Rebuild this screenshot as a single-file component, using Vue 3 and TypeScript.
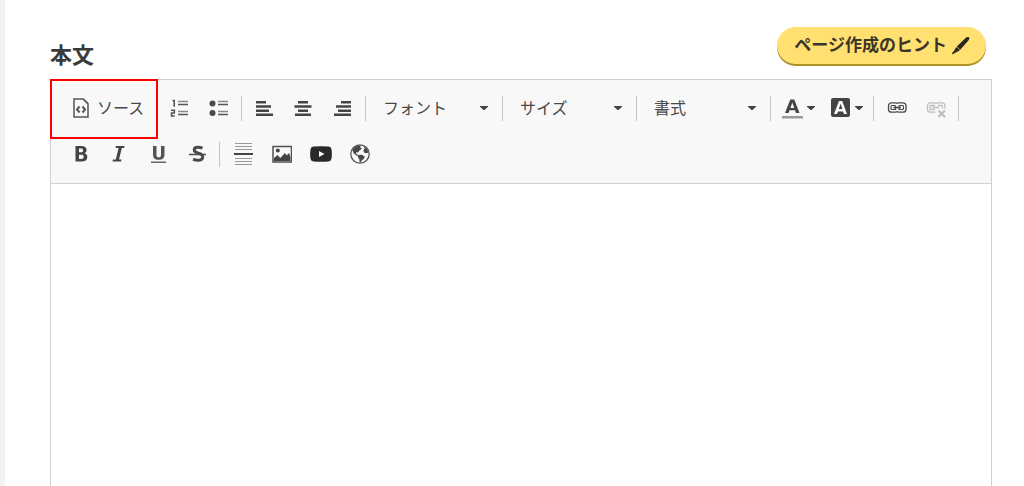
<script setup lang="ts">
import { ref } from 'vue'

interface Combo {
  id: string
  label: string
  wide: boolean
}

const body = ref<string>('')

const combos: Combo[] = [
  { id: 'font', label: 'フォント', wide: true },
  { id: 'size', label: 'サイズ', wide: false },
  { id: 'format', label: '書式', wide: false },
]
</script>

<template>
  <main class="page">
    <header class="head">
      <label class="title" for="body-text">本文</label>
      <button class="hint" type="button">
        <span>ページ作成のヒント</span>
        <svg width="20" height="20" viewBox="0 0 20 20" aria-hidden="true">
          <path d="M14.800 1.700c1-.9 2.300-1 3-.4.700.7.700 1.800-.2 2.900L9.200 13.700 5.800 10.600zM5.500 10.900l3.400 3.100c-1 1.100-2.200 1.600-3.400 2L1.800 18.200l-.9-.9 2.600-3.100c.4-1.200 1-2.400 2-3.300z" fill="#2a2822" />
        </svg>
      </button>
    </header>

    <section class="editor">
      <div class="toolbar" role="toolbar" aria-label="本文">
        <div class="row">
          <button class="source" type="button">
            <svg width="16" height="20" viewBox="0 0 16 20" fill="none" stroke="#555" stroke-width="1.500" aria-hidden="true">
              <path d="M1 1h9.500L15 5.500V19H1zM10.500 1.500L14.500 5.500" />
              <path d="M6.500 8.500L4 11.500l2.500 3M9.500 8.500l2.500 3-2.500 3" stroke-width="2" />
            </svg>
            <span>ソース</span>
          </button>
          <button class="tool" type="button" aria-label="番号付きリスト">
            <svg width="20" height="20" viewBox="0 0 20 20" fill="none" stroke="#555" aria-hidden="true">
              <path d="M2.500 2.500h1.700v6.300M1 12.300h3.300v2.700H1.500v3h3.300" stroke-width="1.600" />
              <path d="M8 3.500h10M8 13.500h10" stroke="#8a8a8a" stroke-width="1.500" />
              <path d="M8 6.500h10M8 16.500h10" stroke-width="1.600" />
            </svg>
          </button>
          <button class="tool" type="button" aria-label="箇条書き">
            <svg width="20" height="20" viewBox="0 0 20 20" fill="none" stroke="#555" aria-hidden="true">
              <circle cx="3.500" cy="5.500" r="3" fill="#4a4a4a" stroke="none" />
              <circle cx="3.500" cy="15" r="3" fill="#4a4a4a" stroke="none" />
              <path d="M9 3.500h10M9 13.500h10" stroke="#8a8a8a" stroke-width="1.500" />
              <path d="M9 6.500h10M9 16.500h10" stroke-width="1.600" />
            </svg>
          </button>
          <span class="sep"></span>
          <button class="tool" type="button" aria-label="左揃え">
            <svg width="20" height="20" viewBox="0 0 20 20" fill="#444" aria-hidden="true">
              <path d="M1 3h10v2.500H1zM1 7.300h15v2.500H1zM1 11.500h13V14H1zM1 15.500h17V18H1z" />
            </svg>
          </button>
          <button class="tool" type="button" aria-label="中央揃え">
            <svg width="20" height="20" viewBox="0 0 20 20" fill="#444" aria-hidden="true">
              <path d="M4 3h10v2.500H4zM.500 7.300h17v2.500H.5zM4 11.500h10V14H4zM1 15.500h16V18H1z" />
            </svg>
          </button>
          <button class="tool" type="button" aria-label="右揃え">
            <svg width="20" height="20" viewBox="0 0 20 20" fill="#444" aria-hidden="true">
              <path d="M8 3h10v2.500H8zM3 7.300h15v2.500H3zM5 11.500h13V14H5zM1 15.500h17V18H1z" />
            </svg>
          </button>
          <span class="sep"></span>
          <template v-for="combo in combos" :key="combo.id">
            <span class="combo" :class="{ wide: combo.wide }">
              <select :aria-label="combo.label">
                <option>{{ combo.label }}</option>
              </select>
              <svg class="arrow" width="8" height="5" viewBox="0 0 8 5" aria-hidden="true"><path d="M0 0h8v.7L4.500 4h-1L0 .7z" fill="#444" /></svg>
            </span>
            <span class="sep"></span>
          </template>
          <button class="tool color" type="button" aria-label="文字色">
            <svg width="22" height="22" viewBox="0 0 22 22" aria-hidden="true">
              <path d="M4 16L9.300 2.500h4L18.500 16H15l-1-2.700H8.500L7.500 16zM9.400 10.900h3.800L11.300 5.400z" fill="#444" fill-rule="evenodd" />
              <path d="M1 19h21v2.500H1z" fill="#999" />
            </svg>
            <svg width="8" height="5" viewBox="0 0 8 5" aria-hidden="true"><path d="M0 0h8v.7L4.500 4h-1L0 .7z" fill="#444" /></svg>
          </button>
          <button class="tool color" type="button" aria-label="背景色">
            <svg width="22" height="22" viewBox="0 0 22 22" aria-hidden="true">
              <rect x="2" y="1" width="19" height="19" rx="2" fill="#444" />
              <path d="M5 17L10 4h3.200L18 17h-3l-1-2.600H9l-1 2.600zM9.800 12.100h3.600L11.600 6.700z" fill="#f8f8f8" fill-rule="evenodd" />
            </svg>
            <svg width="8" height="5" viewBox="0 0 8 5" aria-hidden="true"><path d="M0 0h8v.7L4.500 4h-1L0 .7z" fill="#444" /></svg>
          </button>
          <span class="sep"></span>
          <button class="tool" type="button" aria-label="リンク">
            <svg width="20" height="20" viewBox="0 0 20 20" fill="none" stroke="#4a4a4a" aria-hidden="true">
              <path d="M10 5.500A2.500 2.500 0 0 0 8.500 4.800H4.500A3 3 0 0 0 1.500 7.800v3.400a3 3 0 0 0 3 3h4a2.500 2.500 0 0 0 1.500-.7M10 5.500a2.500 2.500 0 0 1 1.500-.7H16a3 3 0 0 1 3 3v3.400a3 3 0 0 1-3 3h-4.500a2.500 2.500 0 0 1-1.500-.7" stroke-width="1.300" />
              <path d="M8.500 7.500H5A1 1 0 0 0 4 8.500v2a1 1 0 0 0 1 1h3.500V7.500M12 7.500h3.500a1 1 0 0 1 1 1v2a1 1 0 0 1-1 1H12V7.500" stroke-width="1.200" />
              <path d="M6.500 9.500h7.500" stroke-width="1.600" />
            </svg>
          </button>
          <button class="tool" type="button" aria-label="リンクを削除" disabled>
            <svg width="20" height="20" viewBox="0 0 20 20" fill="none" stroke="#bebebe" aria-hidden="true">
              <path d="M10 5.500A2.500 2.500 0 0 0 8.500 4.800H4.500A3 3 0 0 0 1.500 7.800v3.400a3 3 0 0 0 3 3h5M10 5.500a2.500 2.500 0 0 1 1.500-.7H16a3 3 0 0 1 3 3v2.700M9 7.500H5A1 1 0 0 0 4 8.500v2a1 1 0 0 0 1 1h4M12 7.500h3.500a1 1 0 0 1 1 1v2M6.500 9.500H13" stroke-width="1.300" />
              <path d="M12.500 12.500l6.500 6.500M19 12.500l-6.500 6.500" stroke-width="2.200" />
            </svg>
          </button>
          <span class="sep"></span>
        </div>

        <div class="row">
          <button class="tool" type="button" aria-label="太字">
            <svg width="20" height="20" viewBox="0 0 20 20" aria-hidden="true">
              <path d="M5.500 2H11c3.700 0 5.600 1.300 5.600 4 0 1.700-.8 2.800-2.300 3.300 2 .5 3 1.700 3 3.700 0 3-2 4.500-5.900 4.500H5.500zM9 4.600v3.700h1.800c1.600 0 2.300-.6 2.300-1.900s-.7-1.800-2.300-1.800zM9 10.800v4.100h2.200c1.700 0 2.500-.7 2.500-2.100s-.8-2-2.500-2z" fill="#444" fill-rule="evenodd" />
            </svg>
          </button>
          <button class="tool" type="button" aria-label="斜体">
            <svg width="20" height="20" viewBox="0 0 20 20" aria-hidden="true">
              <path d="M7 2h8.500l-.4 2h-2.300L10 15.500h2.500l-.5 2H3.500l.5-2h2.800L9.600 4H6.500z" fill="#444" />
            </svg>
          </button>
          <button class="tool" type="button" aria-label="下線">
            <svg width="20" height="20" viewBox="0 0 20 20" aria-hidden="true">
              <path d="M5 2h3.500v8.500c0 2 .6 2.800 2.200 2.800s2.300-.8 2.300-2.800V2h3.500v8.500c0 3.600-1.800 5.300-5.800 5.300S5 14.100 5 10.500z" fill="#555" />
              <path d="M3 17.500h15V19H3z" fill="#666" />
            </svg>
          </button>
          <button class="tool" type="button" aria-label="打ち消し線">
            <svg width="20" height="20" viewBox="0 0 20 20" fill="none" stroke="#4a4a4a" aria-hidden="true">
              <path d="M15.500 4.300C14 3.500 12.500 3.300 11 3.300c-2.500 0-3.800.9-3.800 2.700 0 4.200 8.500 2 8.500 6.700 0 2.300-1.700 3.600-4.700 3.600-1.800 0-3.400-.4-4.900-1.200" stroke-width="3" />
              <path d="M2 10.500h17" stroke-width="1.500" />
            </svg>
          </button>
          <span class="sep"></span>
          <button class="tool" type="button" aria-label="横罫線">
            <svg width="20" height="24" viewBox="0 0 20 24" fill="none" stroke="#999" aria-hidden="true">
              <path d="M2 1.500h17M2 4.500h17M2 7.500h17M2 16.500h17M2 19.500h17M2 22.500h17" />
              <path d="M1 12h19" stroke="#444" stroke-width="2" />
            </svg>
          </button>
          <button class="tool" type="button" aria-label="画像">
            <svg width="20" height="20" viewBox="0 0 20 20" aria-hidden="true">
              <path d="M1 2.500h18.500v15.500H1z" fill="none" stroke="#505050" stroke-width="1.500" />
              <circle cx="5.800" cy="6.500" r="2" fill="#444" />
              <path d="M2 17v-3L5.500 11l2.800 3L13 9l1.700 2.500 2.300-2.500 1.500 4v4z" fill="#444" />
            </svg>
          </button>
          <button class="tool" type="button" aria-label="動画">
            <svg width="22" height="20" viewBox="0 0 22 20" aria-hidden="true">
              <path d="M3.500 2.500Q11 1.800 18.500 2.500 21 2.700 21.500 5.200 22.200 10 21.500 14.800 21 17.300 18.500 17.500 11 18.200 3.500 17.500 1 17.300.5 14.800-.2 10 .5 5.200 1 2.700 3.500 2.500z" fill="#292929" />
              <path d="M9 7l5.500 3L9 13z" fill="#f8f8f8" />
            </svg>
          </button>
          <button class="tool" type="button" aria-label="埋め込み">
            <svg width="20" height="20" viewBox="0 0 20 20" aria-hidden="true">
              <circle cx="10" cy="10" r="9.200" fill="none" stroke="#555" stroke-width="1.300" />
              <path d="M4 3.500L8 1.500l3 .2-1 1.600 2 1.200-2.500 2-1.500 2-2-.3.300 1.800 2 1 .500 1-2.500-.5L3.500 9 2.300 6zM8.500 11l3.500-.3 2.800 2-1 2.300-2 1.200-1 2.300-1.200-.5-.4-3-1.500-2zM14 2.500l3 2.500 1.500 3.500-2 .8-2.200-.6-1-2.200 1.200-1.500z" fill="#484848" />
            </svg>
          </button>
        </div>
        <span class="marker"></span>
      </div>
      <textarea id="body-text" v-model="body"></textarea>
    </section>
  </main>
</template>

<style>
body {
  margin: 0;
  background: #fff;
}
</style>

<style scoped>
.page {
  box-sizing: border-box;
  min-height: 100vh;
  display: flex;
  flex-direction: column;
  padding: 24px 32px 0 45px;
  border-left: 5px solid #f3f2f2;
  font-family: "Liberation Sans", "Noto Sans CJK JP", sans-serif;
  color: #484848;
}

button,
select,
textarea {
  font: inherit;
  color: inherit;
  border: 0;
  margin: 0;
  padding: 0;
  background: transparent;
}

svg {
  display: block;
  flex: none;
}

.head {
  display: flex;
  justify-content: space-between;
  align-items: flex-start;
  height: 55px;
  padding-right: 6px;
}

.title {
  padding-top: 16px;
  font-size: 22px;
  line-height: 32px;
  font-weight: 700;
  color: #3a3a3a;
}

.hint {
  display: flex;
  align-items: center;
  gap: 4px;
  height: 37px;
  margin-top: 3px;
  padding: 0 15px 0 17px;
  border-radius: 20px;
  background: #ffe070;
  box-shadow: 0 2px 0 #ae9128;
  font-size: 17px;
  line-height: 24px;
  font-weight: 700;
  color: #3a3629;
  white-space: nowrap;
}

.editor {
  flex: 1;
  display: flex;
  flex-direction: column;
  border: 1px solid #d1d1d1;
  border-bottom: 0;
}

.toolbar {
  position: relative;
  padding: 5px 9px 6px;
  border-bottom: 1px solid #d1d1d1;
  background: #f8f8f8;
}

.row {
  display: flex;
  align-items: center;
  min-height: 46px;
}

.source {
  display: flex;
  align-items: center;
  gap: 8px;
  width: 100px;
  height: 38px;
  padding-left: 13px;
  font-size: 16px;
  line-height: 24px;
  white-space: nowrap;
}

.source span {
  padding-top: 2px;
}

.tool {
  flex: none;
  display: flex;
  align-items: center;
  justify-content: center;
  width: 39px;
  height: 38px;
}

.color {
  width: 48px;
  gap: 4px;
}

.sep {
  flex: none;
  width: 1px;
  height: 25px;
  margin: 0 3px;
  background: #c4c4c4;
}

.combo {
  flex: none;
  position: relative;
  width: 127px;
  height: 38px;
}

.wide {
  width: 130px;
}

.combo select {
  box-sizing: border-box;
  appearance: none;
  width: 100%;
  height: 38px;
  padding: 2px 0 0 14px;
  font-size: 16px;
  line-height: 24px;
}

.arrow {
  position: absolute;
  right: 11px;
  top: 17px;
  pointer-events: none;
}

.marker {
  position: absolute;
  left: -1px;
  top: -1px;
  width: 104px;
  height: 56px;
  border: 2px solid #f00;
  pointer-events: none;
}

textarea {
  flex: 1;
  min-height: 200px;
  padding: 16px;
  resize: none;
  outline: none;
  background: #fff;
  font-size: 16px;
}
</style>
